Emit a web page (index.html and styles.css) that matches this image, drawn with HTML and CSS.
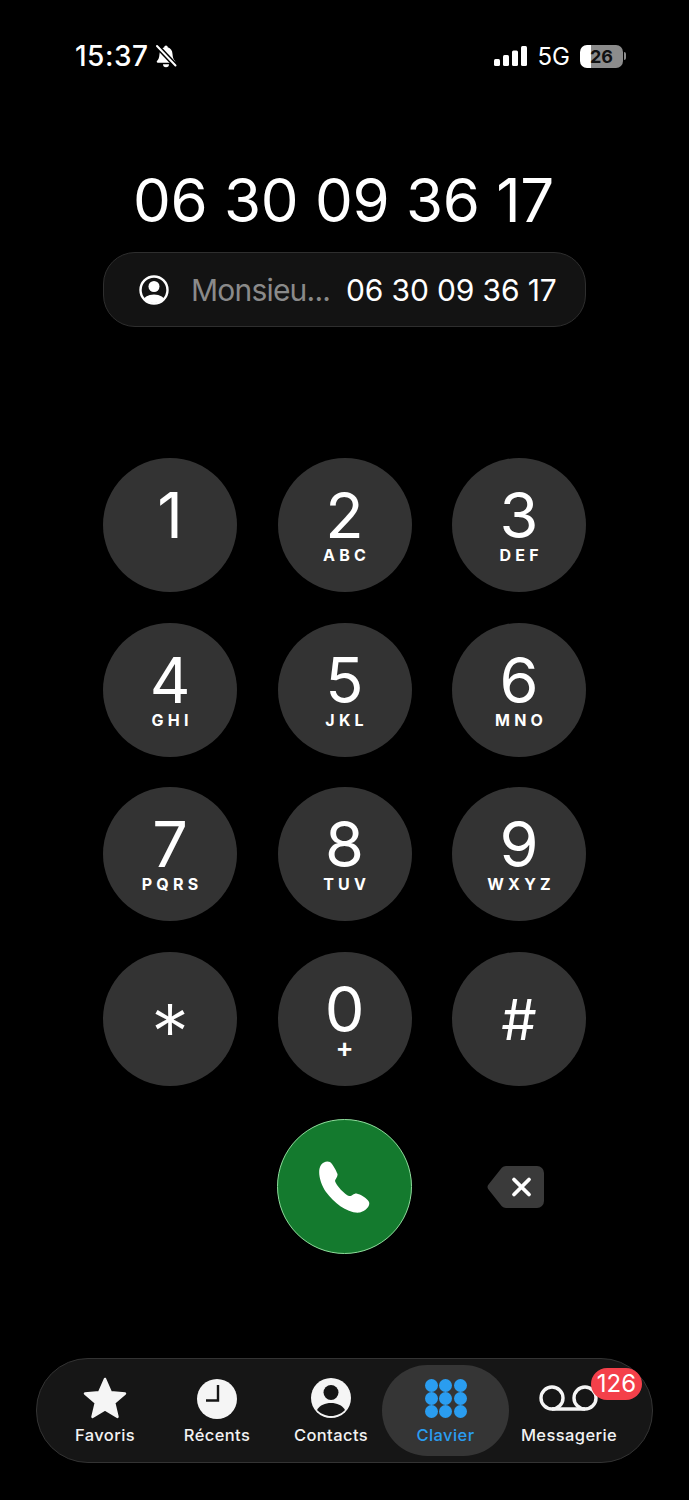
FILE: index.html
```html
<!DOCTYPE html>
<html lang="fr">
<head>
    <meta charset="UTF-8">
    <meta name="viewport" content="width=device-width, initial-scale=1.0">
    <title>Clavier</title>
    <link rel="stylesheet" href="styles.css">
</head>
<body>
    <div class="status">
        <div class="status-left">
            <span class="time">15:37</span>
            <svg class="bell" viewBox="0 0 24 24" width="24" height="24">
                <path d="M12 1.500c-1 0-1.700.8-1.700 1.700C7.200 4 5.700 6.500 5.500 10c-.2 3.500-1 5.500-2.500 7-.6.7-.2 1.700.8 1.700h16.400c1 0 1.400-1 .8-1.700-1.500-1.500-2.300-3.500-2.500-7-.2-3.500-1.700-6-4.800-6.800 0-.9-.7-1.700-1.700-1.700z" fill="#fff"/>
                <path d="M9 20.200a3 3 0 0 0 6 0z" fill="#fff"/>
                <path d="M2.500 1.500l19.500 20.500" stroke="#000" stroke-width="5"/>
                <path d="M3 2l18.500 19.500" stroke="#fff" stroke-width="2" stroke-linecap="round"/>
            </svg>
        </div>
        <div class="status-right">
            <svg class="signal" viewBox="0 0 34 20" width="34" height="20">
                <rect x="0" y="13" width="6" height="7" rx="1.500" fill="#fff"/>
                <rect x="9" y="9" width="6" height="11" rx="1.500" fill="#fff"/>
                <rect x="18" y="4.500" width="6" height="15.500" rx="1.500" fill="#fff"/>
                <rect x="27" y="0" width="6" height="20" rx="1.500" fill="#fff"/>
            </svg>
            <span class="network">5G</span>
            <div class="battery">
                <div class="battery-body"><span class="battery-level">26</span></div>
                <div class="battery-tip"></div>
            </div>
        </div>
    </div>

    <div class="number">06 30 09 36 17</div>

    <div class="contact-pill">
        <svg class="pill-icon" viewBox="0 0 30 30" width="30" height="30">
            <defs>
                <clipPath id="pill-clip"><circle cx="15" cy="15" r="13"/></clipPath>
            </defs>
            <circle cx="15" cy="15" r="13.500" fill="none" stroke="#fff" stroke-width="2.400"/>
            <circle cx="15" cy="11.500" r="5.500" fill="#fff"/>
            <ellipse cx="15" cy="26" rx="11" ry="6.500" fill="#fff" clip-path="url(#pill-clip)"/>
        </svg>
        <span class="pill-name">Monsieu...</span>
        <span class="pill-number">06 30 09 36 17</span>
    </div>

    <div class="keypad">
        <button class="key"><span class="digit">1</span></button>
        <button class="key"><span class="digit">2</span><span class="letters">ABC</span></button>
        <button class="key"><span class="digit">3</span><span class="letters">DEF</span></button>
        <button class="key"><span class="digit">4</span><span class="letters">GHI</span></button>
        <button class="key"><span class="digit">5</span><span class="letters">JKL</span></button>
        <button class="key"><span class="digit">6</span><span class="letters">MNO</span></button>
        <button class="key"><span class="digit">7</span><span class="letters">PQRS</span></button>
        <button class="key"><span class="digit">8</span><span class="letters">TUV</span></button>
        <button class="key"><span class="digit">9</span><span class="letters">WXYZ</span></button>
        <button class="key key-symbol"><span class="star">*</span></button>
        <button class="key"><span class="digit">0</span><span class="letters plus">+</span></button>
        <button class="key key-symbol"><span class="hash">#</span></button>
    </div>

    <div class="call-row">
        <button class="call">
            <svg viewBox="0 0 52 52" width="52" height="52">
                <path d="M3 4C5 1 9-.5 12 1c2 1 6 8 7.500 12 .5 3-2.500 5-2.500 7 1 4 10 14 14 15 3 .5 4-2.500 7.500-2.500 3.500.5 11.500 5.500 12.500 8.500 1.500 4-3 9-9 10.500C30 53 16 42 8 31 2 22-1 10 3 4z" fill="#fff"/>
            </svg>
        </button>
        <svg class="backspace" viewBox="0 0 57 42" width="57" height="42">
            <path d="M19 0h31a7 7 0 0 1 7 7v28a7 7 0 0 1-7 7H19a6 6 0 0 1-4.200-1.800L1.500 23.500a4 4 0 0 1 0-5L14.800 1.800A6 6 0 0 1 19 0z" fill="#3a3a3a"/>
            <path d="M27 13.500l15 15M42 13.500l-15 15" stroke="#fff" stroke-width="3.800" stroke-linecap="round"/>
        </svg>
    </div>

    <nav class="tabs">
        <div class="tab">
            <svg class="star-icon" viewBox="0 0 46 44" width="46" height="44">
                <path d="M23 3l5.800 13.200 14.200 1.300-10.800 9.400 3.300 14-12.500-7.400-12.500 7.400 3.300-14L3 17.500l14.200-1.300z" fill="#f5f5f5" stroke="#f5f5f5" stroke-width="2.500" stroke-linejoin="round"/>
            </svg>
            <span class="tab-label">Favoris</span>
        </div>
        <div class="tab">
            <svg viewBox="0 0 44 44" width="44" height="44">
                <circle cx="22" cy="23" r="20" fill="#f5f5f5"/>
                <path d="M23 9v15.500H11" fill="none" stroke="#161616" stroke-width="2.400"/>
            </svg>
            <span class="tab-label">Récents</span>
        </div>
        <div class="tab">
            <svg viewBox="0 0 44 44" width="44" height="44">
                <circle cx="22" cy="22" r="20" fill="#f5f5f5"/>
                <circle cx="22" cy="16.500" r="7.500" fill="#161616"/>
                <path d="M8 34c3-5 8-7 14-7s11 2 14 7c-3.500 3.500-8.500 6-14 6s-10.500-2.500-14-6z" fill="#161616"/>
            </svg>
            <span class="tab-label">Contacts</span>
        </div>
        <div class="tab tab-active">
            <div class="dots">
                <i></i><i></i><i></i><i></i><i></i><i></i><i></i><i></i><i></i>
            </div>
            <span class="tab-label">Clavier</span>
        </div>
        <div class="tab">
            <svg viewBox="0 0 60 44" width="60" height="44">
                <circle cx="13" cy="22" r="11" fill="none" stroke="#f5f5f5" stroke-width="3.400"/>
                <circle cx="46" cy="22" r="11" fill="none" stroke="#f5f5f5" stroke-width="3.400"/>
                <path d="M13 33h33" stroke="#f5f5f5" stroke-width="3.400"/>
            </svg>
            <span class="tab-label">Messagerie</span>
            <span class="badge">126</span>
        </div>
    </nav>
</body>
</html>
```

FILE: styles.css
```css
body {
    margin: 0;
    background-color: #000;
    color: #fff;
    font-family: Inter, "Liberation Sans", sans-serif;
}

.status {
    display: flex;
    justify-content: space-between;
    align-items: center;
    height: 36px;
    padding: 38px 63px 0 75px;
}

.status-left,
.status-right {
    display: flex;
    align-items: center;
}

.time {
    font-size: 28px;
    font-weight: 500;
    letter-spacing: 0.5px;
}

.bell {
    margin-left: 6px;
}

.network {
    font-size: 24px;
    margin-left: 10px;
}

.battery {
    display: flex;
    align-items: center;
    margin-left: 10px;
}

.battery-body {
    width: 43px;
    height: 23px;
    border-radius: 7px;
    background: linear-gradient(to right, #fff 26%, #8c8c8c 26%);
    display: flex;
    align-items: center;
    justify-content: center;
}

.battery-level {
    color: #111;
    font-size: 18px;
    font-weight: 700;
}

.battery-tip {
    width: 2px;
    height: 8px;
    margin-left: 1px;
    border-radius: 0 2px 2px 0;
    background-color: #8c8c8c;
}

.number {
    margin-top: 90px;
    margin-right: 2px;
    height: 72px;
    line-height: 72px;
    text-align: center;
    font-size: 60px;
    letter-spacing: -0.3px;
}

.contact-pill {
    display: flex;
    align-items: center;
    box-sizing: border-box;
    width: 483px;
    height: 75px;
    margin: 16px auto 0;
    padding-left: 35px;
    border: 1px solid #2e2e2e;
    border-radius: 32px;
    background-color: #131313;
    font-size: 30px;
}

.pill-name {
    margin-left: 22px;
    color: #8a8a8a;
    letter-spacing: -0.8px;
}

.pill-number {
    margin-left: 16px;
    letter-spacing: -0.15px;
}

.keypad {
    display: grid;
    grid-template-columns: repeat(3, 134px);
    gap: 30.7px 40.5px;
    justify-content: center;
    margin-top: 131px;
}

.key {
    display: flex;
    flex-direction: column;
    align-items: center;
    width: 134px;
    height: 134px;
    padding: 27px 0 0;
    border: none;
    border-radius: 50%;
    background-color: #333;
    color: #fff;
    font-family: inherit;
}

.digit {
    height: 60px;
    line-height: 60px;
    font-size: 63px;
}

.letters {
    height: 20px;
    line-height: 20px;
    font-size: 16px;
    font-weight: 700;
    letter-spacing: 4.200px;
    margin-right: -4.200px;
}

.plus {
    font-size: 27px;
    font-weight: 600;
    line-height: 18px;
    margin-right: 0;
    letter-spacing: 0;
}

.key-symbol {
    padding-top: 0;
    justify-content: center;
}

.star {
    font-size: 76px;
    font-weight: 350;
    line-height: 76px;
    height: 76px;
    margin-top: 24px;
}

.hash {
    font-size: 56px;
    line-height: 56px;
    margin-top: 2px;
}

.call-row {
    display: grid;
    grid-template-columns: repeat(3, 134px);
    column-gap: 40.5px;
    justify-content: center;
    align-items: center;
    margin-top: 33px;
}

.call {
    grid-column: 2;
    display: flex;
    align-items: center;
    justify-content: center;
    box-sizing: border-box;
    width: 135px;
    height: 135px;
    margin-left: -1px;
    padding: 0;
    border: 1.500px solid #8fdc9c;
    border-radius: 50%;
    background-color: #147a2e;
}

.backspace {
    margin: 0 0 0 35px;
}

.tabs {
    display: grid;
    grid-template-columns: 98px 126px 102px 127px 120px;
    box-sizing: border-box;
    width: 617px;
    height: 105px;
    margin: 104px 0 0 36px;
    padding: 6px 25px 6px 19px;
    border: 1px solid #333;
    border-radius: 52px;
    background-color: #161616;
}

.tab {
    position: relative;
    display: flex;
    flex-direction: column;
    align-items: center;
    padding-top: 11px;
    color: #f2f2f2;
}

.tab svg {
    display: block;
}

.tab-label {
    margin-top: 5px;
    font-size: 16.500px;
    font-weight: 500;
    letter-spacing: 0.4px;
}

.tab-active {
    border-radius: 46px;
    background-color: #353535;
    color: #2a9df0;
}

.dots {
    display: grid;
    grid-template-columns: repeat(3, 13px);
    gap: 0 1.500px;
    margin: 3px 0 2px;
}

.dots i {
    width: 13px;
    height: 13px;
    border-radius: 50%;
    background-color: #2a9df0;
}

.badge {
    position: absolute;
    top: 3px;
    right: -13px;
    width: 51px;
    height: 32px;
    line-height: 32px;
    border-radius: 16px;
    background-color: #f4404a;
    color: #fff;
    text-align: center;
    font-size: 24px;
}
```
